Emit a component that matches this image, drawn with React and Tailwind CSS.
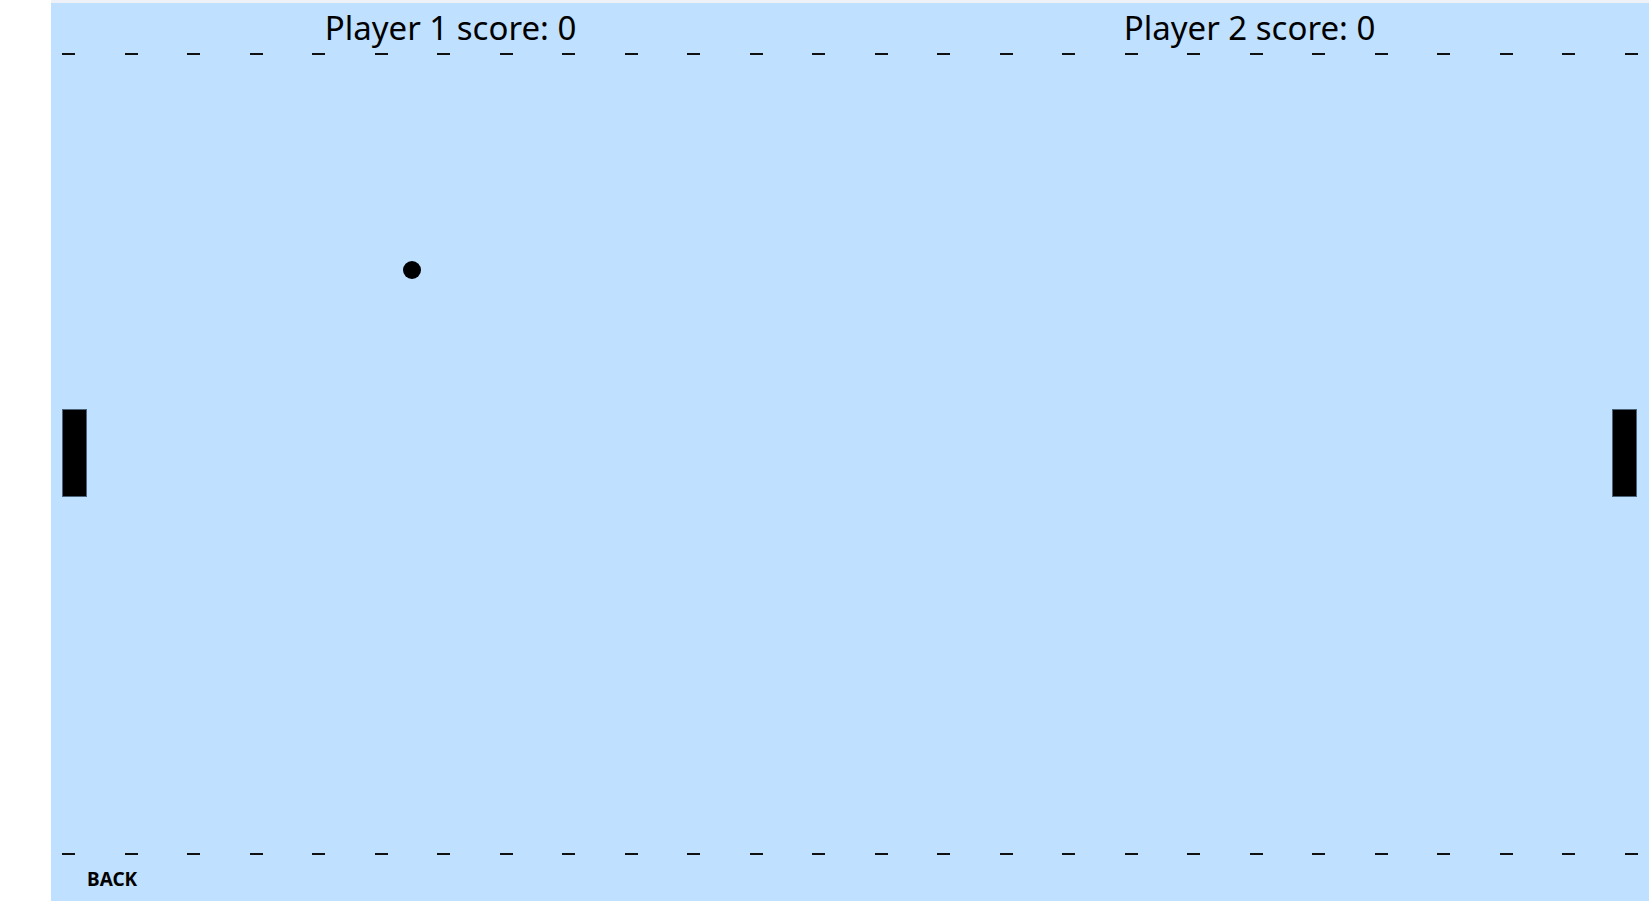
import React from "react";

const DASHES = Array.from({ length: 26 });

function DashRow() {
  return (
    <div className="flex h-[2px] justify-between px-[11px]">
      {DASHES.map((_, i) => (
        <div key={i} className="h-[2px] w-[13px] bg-[#111]" />
      ))}
    </div>
  );
}

export default function App() {
  return (
    <div
      className="flex h-[901px] w-[1649px] overflow-hidden bg-white"
      style={{ fontFamily: '"Comic Sans MS", "Noto Sans", sans-serif' }}
    >
      <div className="w-[51px] shrink-0 bg-white" />
      <div className="flex flex-1 flex-col bg-[#bfe0ff]">
        <div className="h-[3px] bg-[#eef1f8]" />
        <div className="flex h-[50px] pt-[8px] text-[33px] leading-none text-black">
          <div className="flex flex-1 justify-center">Player 1 score: 0</div>
          <div className="flex flex-1 justify-center">Player 2 score: 0</div>
        </div>
        <DashRow />
        <div className="relative flex-1">
          <div className="absolute left-[11px] top-[354px] h-[88px] w-[25px] border border-[#4a6378] bg-black" />
          <div className="absolute right-[12px] top-[354px] h-[88px] w-[25px] border border-[#4a6378] bg-black" />
          <div className="absolute left-[352px] top-[206px] h-[18px] w-[18px] rounded-full bg-black" />
        </div>
        <DashRow />
        <div className="h-[46px] pl-[36px] pt-[15px] text-[19px] font-bold leading-none text-black">
          BACK
        </div>
      </div>
    </div>
  );
}
